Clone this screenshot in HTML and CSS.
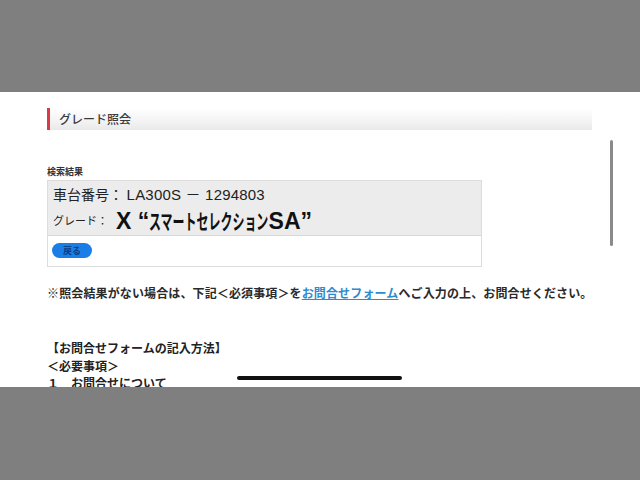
FILE: index.html
```html
<!DOCTYPE html>
<html lang="ja">
<head>
  <meta charset="UTF-8" />
  <meta name="viewport" content="width=device-width, initial-scale=1.0"/>
  <title>グレード照会</title>
  <link rel="stylesheet" href="styles.css">
</head>
<body>
  <div class="screen">
    <div class="content">
      <h2 class="heading">グレード照会</h2>

      <p class="label">検索結果</p>
      <div class="result">
        <div class="result-info">
          <div class="row-frame">
            <span class="key">車台番号：</span>
            <span class="frame-no">LA300S － 1294803</span>
          </div>
          <div class="row-grade">
            <span class="key-small">グレード：</span>
            <span class="grade">X “<span class="grade-kana">スマートセレクション</span>SA”</span>
          </div>
        </div>
        <div class="result-actions">
          <button class="back-btn">戻る</button>
        </div>
      </div>

      <p class="note">※照会結果がない場合は、下記＜必須事項＞を<a href="#">お問合せフォーム</a>へご入力の上、お問合せください。</p>

      <div class="howto">
        <p>【お問合せフォームの記入方法】</p>
        <p>＜必要事項＞</p>
        <p>１　お問合せについて</p>
      </div>
    </div>

    <div class="scrollbar"></div>
    <div class="home-bar"></div>
  </div>
</body>
</html>
```

FILE: styles.css
```css
body {
  margin: 0;
  background: #7f7f7f;
  font-family: "Noto Sans CJK JP", sans-serif;
  color: #222;
  height: 480px;
  overflow: hidden;
}

.screen {
  position: relative;
  margin-top: 92px;
  height: 295px;
  background: #ffffff;
  overflow: hidden;
}

.content {
  padding: 16px 48px 0 47px;
}

.heading {
  margin: 0;
  width: 533px;
  height: 22px;
  padding-left: 9px;
  border-left: 3px solid #d93a45;
  background: linear-gradient(to bottom, #ffffff 0%, #f3f3f3 60%, #e9e9e9 100%);
  font-size: 12px;
  font-weight: 500;
  line-height: 22px;
  color: #3a3a3a;
}

.label {
  margin: 36px 0 2px;
  font-size: 9px;
  font-weight: bold;
  line-height: 12px;
  color: #333;
}

.result {
  width: 433px;
  border: 1px solid #dcdcdc;
}

.result-info {
  background: #ececec;
  border-bottom: 1px solid #d6d6d6;
  padding: 1px 5px 0;
}

.row-frame {
  height: 22px;
  line-height: 22px;
}

.key {
  font-size: 14px;
  color: #222;
}

.frame-no {
  font-family: "Liberation Sans", "Noto Sans CJK JP", sans-serif;
  font-size: 15px;
  letter-spacing: 0.2px;
}

.row-grade {
  height: 31px;
  display: flex;
  align-items: center;
}

.key-small {
  font-size: 11px;
  margin-right: 8px;
}

.grade {
  font-family: "Liberation Sans", "Noto Sans CJK JP", sans-serif;
  font-size: 23px;
  font-weight: bold;
  color: #111;
  white-space: nowrap;
}

.grade-kana {
  display: inline-block;
  font-family: "Noto Sans CJK JP", sans-serif;
  font-size: 21px;
  transform: scaleX(0.57);
  transform-origin: left center;
  margin-right: -90px;
}

.result-actions {
  padding: 7px 4px 8px;
  background: #ffffff;
}

.back-btn {
  display: block;
  width: 40px;
  height: 15px;
  padding: 0;
  border: none;
  border-radius: 8px;
  background: #1a7ee6;
  color: #0c3f86;
  font-family: "Noto Sans CJK JP", sans-serif;
  font-size: 9px;
  font-weight: bold;
  line-height: 15px;
}

.note {
  margin: 17px 0 0;
  font-size: 12px;
  line-height: 18px;
  font-weight: bold;
  letter-spacing: 0.13px;
  white-space: nowrap;
  color: #2a2a2a;
}

.note a {
  color: #2d8ccf;
  text-decoration: underline;
}

.howto {
  margin-top: 37px;
  font-size: 12px;
  font-weight: bold;
  line-height: 17.5px;
  color: #222;
}

.howto p {
  margin: 0;
}

.scrollbar {
  position: absolute;
  left: 610px;
  top: 48px;
  width: 3px;
  height: 106px;
  border-radius: 2px;
  background: #8a8a8a;
}

.home-bar {
  position: absolute;
  left: 237px;
  top: 284px;
  width: 165px;
  height: 4px;
  border-radius: 2px;
  background: #111;
}
```
